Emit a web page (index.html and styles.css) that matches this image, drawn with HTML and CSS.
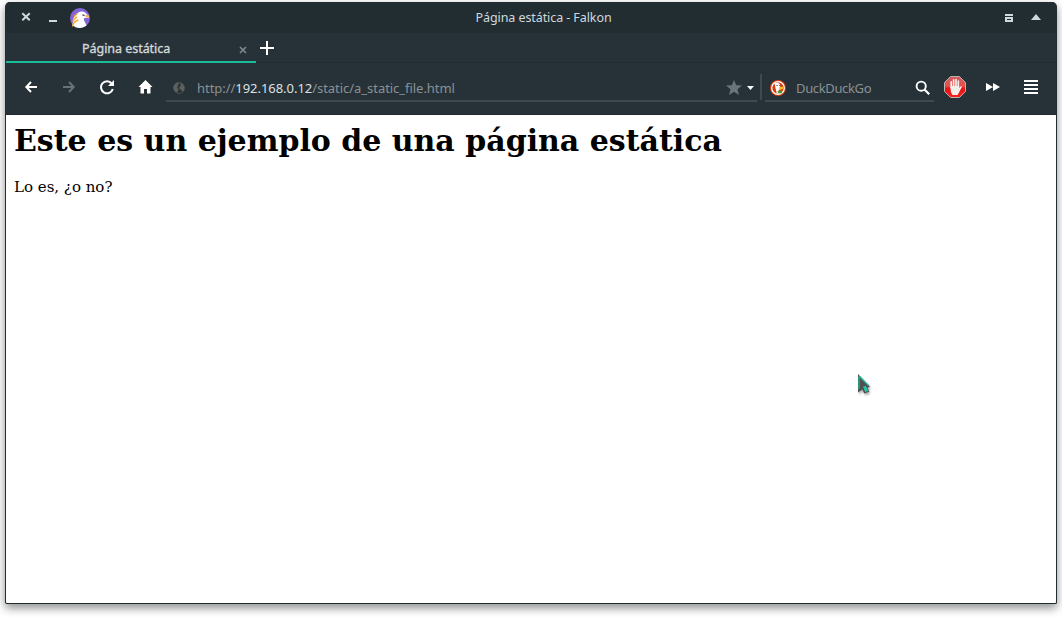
FILE: index.html
```html
<!DOCTYPE html>
<html lang="es">
<head>
<meta charset="utf-8">
<title>Página estática</title>
<link rel="stylesheet" href="styles.css">
</head>
<body>
<div class="window">
  <header class="titlebar">
    <div class="title-left">
      <svg class="win-close" width="10" height="10" viewBox="0 0 10 10"><path d="M1.300 1.300l7.400 7M8.700 1.300l-7.400 7" stroke="#cfd8dc" stroke-width="2"/></svg>
      <svg class="win-min" width="8" height="10" viewBox="0 0 8 10"><path d="M0 7h8v2H0z" fill="#cfd8dc"/></svg>
      <svg class="falkon" width="20" height="20" viewBox="0 0 20 20">
        <circle cx="10" cy="10" r="10" fill="#8365d6"/>
        <path d="M2.300 17C3.500 14 2.200 11 4.500 8.500 6 6.500 7.500 4 11 3.500c2.500-.3 4.500.8 5.500 2.500l2 1.500c.4 1 .4 2 0 2.700-1.700-.7-3.500-.6-4.700.2-.4 2.600 2.300 4.500 2.700 7.200C12.500 20.800 6 20.800 2.300 17z" fill="#fff"/>
        <path d="M2.500 18.500c.5-4 2.500-5.500 6-6.500M2.800 13.500c.7-2.500 2-3.500 4.200-4.500M4 8.500l3.500-3" fill="none" stroke="#f6a937" stroke-width="1.400"/>
        <path d="M15.500 6.500l3 1c.5 1 .5 2 .1 2.600L15.500 8.800z" fill="#f5ae4b"/>
        <path d="M12.500 6.800l2 .8" stroke="#34314a" stroke-width="1.200"/>
      </svg>
    </div>
    <div class="title">Página estática - Falkon</div>
    <div class="title-right">
      <svg width="8" height="8" viewBox="0 0 8 8"><path d="M0 0h8v2H0zM0 3h8v5H0zM2 5v1h4V5z" fill="#cfd8dc" fill-rule="evenodd"/></svg>
      <svg class="win-max" width="10" height="6" viewBox="0 0 10 6"><path d="M5 0l5 6H0z" fill="#cfd8dc"/></svg>
    </div>
  </header>
  <nav class="tabs">
    <div class="tab">
      <span class="tab-label">Página estática</span>
      <svg class="tab-close" width="8" height="8" viewBox="0 0 8 8"><path d="M1 1l6 6M7 1L1 7" stroke="#7e878a" stroke-width="1.700"/></svg>
    </div>
    <svg class="new-tab" width="14" height="14" viewBox="0 0 14 14"><path d="M6 0h2v6h6v2H8v6H6V8H0V6h6z" fill="#fff"/></svg>
  </nav>
  <div class="toolbar">
    <div class="nav-buttons">
      <svg width="16" height="16" viewBox="0 0 16 16"><path d="M14 8H4M8 3L3.300 8 8 13" fill="none" stroke="#fff" stroke-width="2"/></svg>
      <svg width="16" height="16" viewBox="0 0 16 16"><path d="M2 8h10M8 3l4.700 5L8 13" fill="none" stroke="#697276" stroke-width="2"/></svg>
      <svg width="16" height="16" viewBox="0 0 16 16"><path d="M12.700 4.500A6 6 0 1 0 13.800 10" fill="none" stroke="#fff" stroke-width="2"/><path d="M15 1v6H9z" fill="#fff"/></svg>
      <svg width="16" height="16" viewBox="0 0 16 16"><path d="M8.500 1l7 7h-2v6.500H10V10H7v4.500H3.500V8h-2z" fill="#fff"/></svg>
    </div>
    <div class="field address">
      <svg class="globe" width="12" height="12" viewBox="0 0 12 12"><circle cx="6" cy="6" r="5.500" fill="#2a3337" stroke="#535856" stroke-width=".8"/><path d="M1 3.500L3 1.200 5.500.5 6 2 4.500 3l.8 1.200L3.800 5.500l1.700 1.300-.3 1.700L4 10.800 1.200 8.500.5 5.500zM7 .8l3 1.400 1.500 3-.3 2.800-1.900 2-1-2.300-1.800-.5L6.300 5l1.600-1z" fill="#5d615d"/></svg>
      <span class="url">http://<b>192.168.0.12</b>/static/a_static_file.html</span>
      <svg class="star" width="16" height="15" viewBox="0 0 16 15"><path d="M8 0l2.200 5.300 5.800.3-4.500 3.600 1.500 5.700-5-3.200-5 3.200 1.500-5.700L0 5.600l5.800-.3z" fill="#6b7579"/></svg>
      <svg class="caret" width="7" height="4" viewBox="0 0 7 4"><path d="M0 0h7L3.500 4z" fill="#fff"/></svg>
    </div>
    <div class="separator"></div>
    <div class="field search">
      <svg class="duck" width="16" height="16" viewBox="0 0 16 16"><circle cx="8" cy="8" r="8" fill="#d93b0b"/><circle cx="8" cy="8" r="6.300" fill="#d93b0b" stroke="#fff" stroke-width="1.300"/><path d="M4.500 3.500c2-1.200 4.500-.8 5.500 1.200L10.500 9l-2 1 1 4-2.700-.3z" fill="#fff"/><path d="M9 7.200l4-.5v2l-2.600 1.100L9 9.300z" fill="#f8c21b"/><path d="M7.500 11H12v2.200H8z" fill="#42a334"/><path d="M6.500 5.500h1.300M9.200 5.500h1" stroke="#275aa0" stroke-width="1.200"/></svg>
      <span class="engine">DuckDuckGo</span>
      <svg class="magnifier" width="15" height="15" viewBox="0 0 15 15"><circle cx="6.200" cy="6.200" r="4.600" fill="none" stroke="#fff" stroke-width="1.900"/><path d="M9.500 9.500l4.700 4.700" stroke="#fff" stroke-width="2.200"/></svg>
    </div>
    <svg class="blocker" width="22" height="22" viewBox="0 0 22 22">
      <defs><linearGradient id="red" x1="0" y1="0" x2="0" y2="1"><stop stop-color="#cf5c5c"/><stop offset=".45" stop-color="#e55050"/><stop offset=".58" stop-color="#e61212"/><stop offset="1" stop-color="#fa2020"/></linearGradient></defs>
      <path d="M6.600.5h8.800l6.100 6.100v8.800l-6.100 6.100H6.600L.5 15.400V6.600z" fill="url(#red)" stroke="#bdb5b5"/>
      <path d="M7.200 12V5.800M9.600 11V3.800M12 11V3.500M14.300 12V5" stroke="#f3eee9" stroke-width="1.700" stroke-linecap="round"/>
      <path d="M6.400 10h8.800v2l1.800-2c.8-.2 1 .5.700 1.200L15 16.500 13.500 19H8.500l-1.600-3z" fill="#f3eee9"/>
    </svg>
    <svg class="forward" width="14" height="8" viewBox="0 0 14 8"><path d="M0 0l7 4-7 4zM7 0l7 4-7 4z" fill="#fff"/></svg>
    <svg class="menu" width="14" height="14" viewBox="0 0 14 14"><path d="M0 0h14v2H0zM0 4h14v2H0zM0 8h14v2H0zM0 12h14v2H0z" fill="#fff"/></svg>
  </div>
  <main class="page">
    <h1 class="heading">Este es un ejemplo de una página estática</h1>
    <p class="text">Lo es, ¿o no?</p>
  </main>
</div>
<svg class="cursor" width="18" height="24" viewBox="0 0 18 24"><path d="M2 1v18.500l4.300-3 2 4 5-1.800-1.800-4 2.500-1z" fill="#505050"/><path d="M3 3.500V16M3.500 3.500l9 9" stroke="#1abc9c" stroke-width="1.200"/><path d="M7 13.500l2.200 5.500 3-1.100-2.200-5z" fill="#1fc8a6"/></svg>
</body>
</html>
```
FILE: styles.css
```css
* { box-sizing: border-box; }
body {
  margin: 0;
  padding: 2px 5px 14px;
  height: 618px;
  overflow: hidden;
  background: #fff;
  font: 13px/18px "Noto Sans", sans-serif;
}
svg { display: block; flex: none; }
.window {
  width: 1052px;
  height: 602px;
  display: flex;
  flex-direction: column;
  border: solid #222d32;
  border-width: 0 1px 1px;
  border-radius: 5px 5px 2px 2px;
  overflow: hidden;
  background: #273238;
  box-shadow: 0 4px 10px rgba(0, 0, 0, .45);
}
.titlebar {
  height: 31px;
  flex: none;
  display: grid;
  grid-template-columns: 1fr auto 1fr;
  align-items: center;
  background: #222d32;
  color: #cfd8dc;
}
.title-left { display: flex; align-items: center; padding-left: 15px; }
.win-close { margin-top: -1px; }
.win-min { margin: 0 13px 0 18px; }
.title { width: 137px; margin-left: 26px; white-space: nowrap; font-size: 12.500px; letter-spacing: -.08px; }
.title-right { display: flex; align-items: center; justify-content: flex-end; gap: 18px; padding-right: 15px; }
.win-max { margin-top: -2px; }
.tabs {
  height: 30px;
  flex: none;
  display: flex;
  align-items: flex-start;
  border-bottom: 1px solid #222b30;
}
.tab {
  width: 250px;
  height: 30px;
  display: flex;
  align-items: center;
  padding: 2px 9px 0 76px;
  border-bottom: 2px solid #1abc9c;
  color: #d2d7d8;
}
.tab-label { flex: 1; padding-top: 1px; white-space: nowrap; font-size: 12.500px; letter-spacing: -.04px; -webkit-text-stroke: .35px; }
.tab-close { margin-top: 3px; }
.new-tab { margin: 8px 0 0 4px; }
.toolbar {
  height: 52px;
  flex: none;
  display: flex;
  align-items: center;
  padding-bottom: 3px;
  border-bottom: 1px solid #1e282d;
}
.nav-buttons { display: flex; gap: 22px; padding-left: 17px; }
.field {
  height: 27px;
  display: flex;
  align-items: center;
  margin-top: 3px;
  border-bottom: 2px solid #3f4a50;
  color: #899195;
}
.address { width: 591px; margin-left: 13px; padding: 0 3px 0 7px; }
.url { flex: 1; margin-left: 12px; white-space: nowrap; letter-spacing: -.04px; }
.url b { font-weight: 400; color: #dce0e1; }
.caret { margin-left: 5px; }
.separator { width: 2px; height: 26px; margin: 0 3px; background: #3f4a50; }
.search { width: 169px; padding: 0 4px 0 5px; }
.engine { flex: 1; margin-left: 10px; letter-spacing: -.36px; }
.blocker { margin-left: 10px; }
.forward { margin-left: 20px; }
.menu { margin-left: 24px; }
.page {
  flex: 1;
  padding: 8px;
  background: #fff;
  color: #000;
  font-family: "DejaVu Serif", serif;
}
.heading { margin: 0; font-size: 30px; line-height: 35px; white-space: nowrap; }
.text { margin: 20px 0 0; font-size: 15px; line-height: 18px; }
.cursor { position: absolute; left: 856px; top: 373px; filter: drop-shadow(1px 2px 1px rgba(0, 0, 0, .3)); }
```
